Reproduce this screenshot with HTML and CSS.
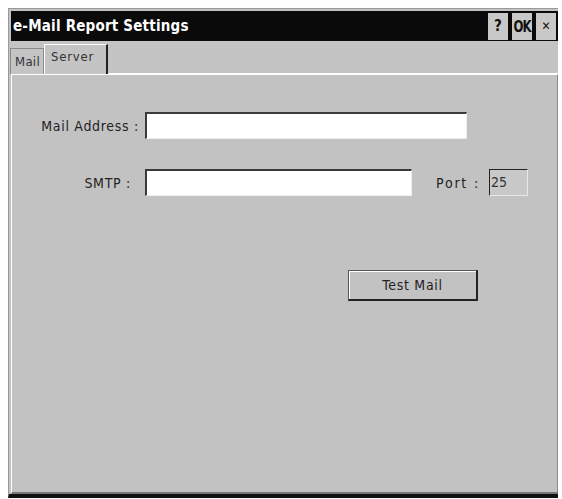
FILE: index.html
```html
<!DOCTYPE html>
<html>
	<head>
		<meta charset="utf-8">
		<title>e-Mail Report Settings</title>
		<link rel="stylesheet" href="styles.css">
	</head>
	<body>
		<div class="window">
			<div class="titlebar">
				<span class="title">e-Mail Report Settings</span>
				<div class="tbtns">
					<span class="tbtn">?</span>
					<span class="tbtn ok"><b>OK</b></span>
					<span class="tbtn x">&#x2715;</span>
				</div>
			</div>
			<div class="tabs">
				<span class="tab">Mail</span>
				<span class="tab active">Server</span>
				<span class="tabline"></span>
			</div>
			<div class="panel">
				<div class="row first">
					<label class="lbl">Mail Address :</label>
					<span class="field mail"></span>
				</div>
				<div class="row second">
					<label class="lbl smtp-lbl">SMTP :</label>
					<span class="field smtp"></span>
					<label class="plbl">Port :</label>
					<span class="field port">25</span>
				</div>
				<div class="btnrow">
					<span class="btn">Test Mail</span>
				</div>
			</div>
		</div>
	</body>
</html>
```
FILE: styles.css
```css
body{margin: 0; background-color: #fff; font-family: "DejaVu Sans Condensed", "Liberation Sans", sans-serif; font-size: 14px; letter-spacing: 0.7px; color: #111;}
.window{margin: 8px 4px 0 8px; height: 490px; border-top: 1px solid #9a9a9a; border-left: 1px solid #9a9a9a; display: flex; flex-direction: column; background-color: #c2c2c2; border-bottom: 4px solid #111; box-sizing: border-box;}
.titlebar{height: 30px; margin: 2px 0 0 2px; background-color: #0a0a0a; display: flex; align-items: center; justify-content: space-between; padding-right: 2px;}
.title{color: #fff; font-weight: bold; font-size: 15px; padding-left: 2px; letter-spacing: 0.2px;}
.tbtns{display: flex; gap: 4px; height: 27px;}
.tbtn{width: 20px; background-color: #c8c8c8; display: flex; align-items: center; justify-content: center; font-weight: bold; font-size: 15px; letter-spacing: 0; color: #111; overflow: hidden;}
.tbtn.ok b{font-size: 13px; letter-spacing: -1px; display: inline-block; transform: scaleY(1.2);}
.tbtn.x{font-weight: normal; font-size: 12px;}
.tabs{display: flex; align-items: flex-end; height: 33px; padding-left: 1px; background-color: #c4c4c4;}
.tab{height: 26px; padding: 0 3px 0 4px; border: 1px solid #8a8a8a; border-bottom: none; display: flex; align-items: center; color: #333; font-size: 13px; letter-spacing: 0.3px; background-color: #c4c4c4; box-sizing: border-box;}
.tab.active{height: 31px; padding: 4px 12px 0 6px; border-left: 1px solid #fff; border-top: 1px solid #fff; border-right: 2px solid #222; margin-bottom: -1px; align-items: flex-start; letter-spacing: 0.8px;}
.tabline{flex: 1; border-bottom: 1px solid #fff;}
.panel{flex: 1; margin-left: 2px; border-left: 1px solid #fff; border-top: 1px solid #fff; border-bottom: 2px solid #777; border-right: 1px solid #888; padding-top: 37px; display: flex; flex-direction: column;}
.row{display: flex; align-items: center;}
.row.second{margin-top: 30px;}
.lbl{width: 127px; text-align: right; padding-right: 6px; color: #222; white-space: nowrap;}
.smtp-lbl{width: 119px; padding-right: 14px;}
.field{height: 27px; box-sizing: border-box; background-color: #fff; border-top: 2px solid #3a3a3a; border-left: 2px solid #3a3a3a; border-right: 1px solid #eee; border-bottom: 1px solid #eee;}
.mail{width: 322px;}
.smtp{width: 267px;}
.plbl{margin-left: 24px; width: 53px; color: #222; white-space: nowrap; letter-spacing: 1.8px;}
.port{width: 39px; background-color: #c8c8c8; border-top-width: 1px; border-left-width: 1px; border-color: #222 #e8e8e8 #e8e8e8 #222; padding-left: 1px; line-height: 24px; color: #333; letter-spacing: 0;}
.btnrow{margin-top: 74px; padding-left: 336px;}
.btn{display: inline-flex; width: 130px; height: 31px; box-sizing: border-box; align-items: center; justify-content: center; border: 1px solid #555; border-right: 2px solid #222; border-bottom: 2px solid #222; box-shadow: inset 1px 1px 0 #fff; color: #222;}
```
